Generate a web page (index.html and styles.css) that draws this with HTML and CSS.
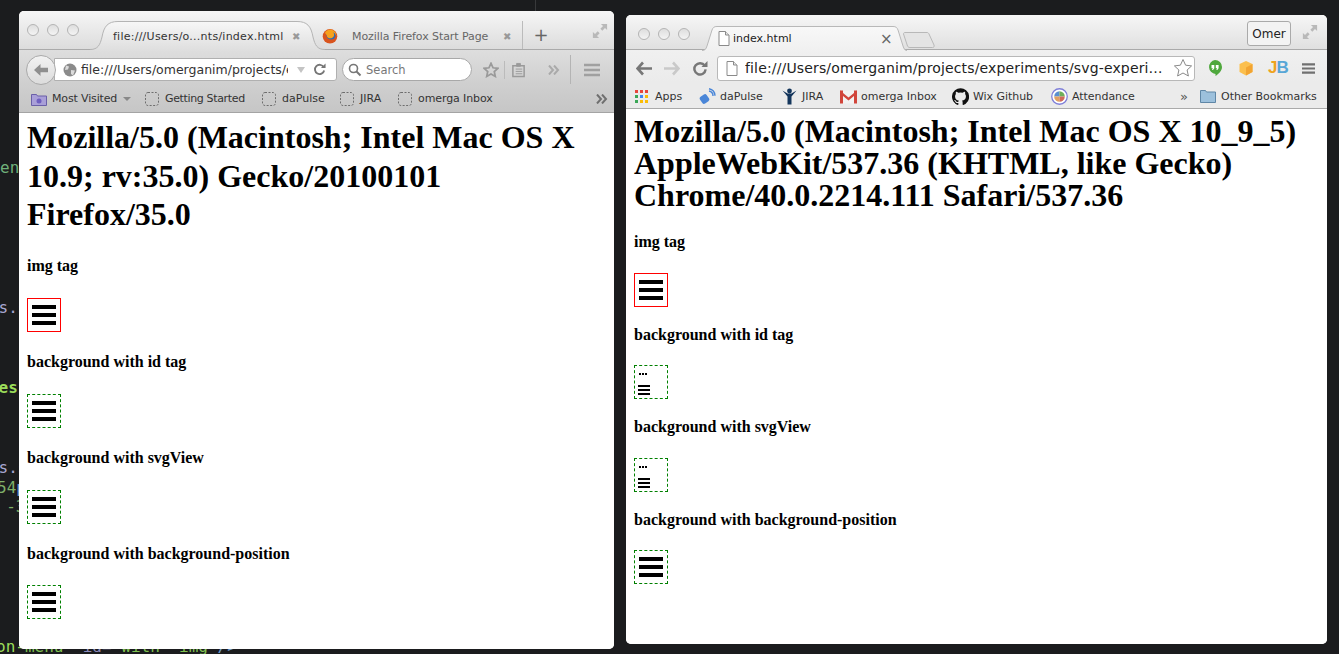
FILE: index.html
```html
<!DOCTYPE html>
<html lang="en">
<head>
<meta charset="utf-8">
<title>Firefox and Chrome side by side</title>
<link rel="stylesheet" href="styles.css">
</head>
<body>
<svg class="defs" width="0" height="0" aria-hidden="true">
  <defs>
    <linearGradient id="tabfill" x1="0" y1="0" x2="0" y2="1"><stop offset="0" stop-color="#f7f7f7"/><stop offset="1" stop-color="#dedede"/></linearGradient>
    <linearGradient id="crfill" x1="0" y1="0" x2="0" y2="1"><stop offset="0" stop-color="#f8f8f8"/><stop offset="1" stop-color="#f0f0f0"/></linearGradient>
    <symbol id="burger" viewBox="0 0 24 20"><rect width="24" height="4"/><rect y="8" width="24" height="4"/><rect y="16" width="24" height="4"/></symbol>
    <symbol id="broken" viewBox="0 0 32 32">
      <rect x="4" y="7" width="2" height="2"/><rect x="7" y="7" width="2" height="2"/><rect x="10" y="7" width="2" height="2"/>
      <rect x="3" y="19" width="12" height="2"/><rect x="3" y="23" width="12" height="2"/><rect x="3" y="27" width="12" height="2"/>
    </symbol>
    <symbol id="full" viewBox="0 0 18 18"><path d="M10 1h7v7l-2.400-2.400-3 3-2.200-2.200 3-3zM1 10v7h7l-2.400-2.400 3-3-2.200-2.200-3 3z"/></symbol>
    <symbol id="chev" viewBox="0 0 12 10"><path d="M1 .5L5 5 1 9.500M6 .5L10 5 6 9.500" fill="none" stroke="currentColor" stroke-width="2"/></symbol>
    <symbol id="dash" viewBox="0 0 14 14"><rect x=".5" y=".5" width="13" height="13" rx="2.500" fill="none" stroke="#6d6d6d" stroke-dasharray="2 1.500"/></symbol>
    <symbol id="doc" viewBox="0 0 12 15"><path d="M1 .5h6.500l3.500 3.500v10.500H1z" fill="#fff" stroke="#8a8a8a"/><path d="M7.500.5V4H11" fill="#e6e6e6" stroke="#8a8a8a"/></symbol>
  </defs>
</svg>

<div class="code code-a">eng</div>
<div class="code code-b">s.s</div>
<div class="code code-c">es.</div>
<div class="code code-d">s.s</div>
<div class="code code-e">54<span class="blue">p</span></div>
<div class="code code-f"> -3</div>
<div class="code code-g"><b class="bright">on-</b>menu" <span class="purple">id=</span>"with  img <span class="blue">/&gt;</span></div>
<div class="rule"></div>

<section class="window firefox">
  <div class="tabbar ff-tabbar">
    <div class="lights"><i></i><i></i><i></i></div>
    <div class="ff-tab">
      <svg class="ff-tabshape" viewBox="0 0 235 30"><path d="M0 28.500C8 28.500 10 24 12 16 14 5 18 .5 28 .5H207C217 .5 221 5 223 16 225 24 227 28.500 235 28.500V30H0z" fill="url(#tabfill)"/><path d="M0 28.500C8 28.500 10 24 12 16 14 5 18 .5 28 .5H207C217 .5 221 5 223 16 225 24 227 28.500 235 28.500" fill="none" stroke="#b4b4b4"/></svg>
      <span class="ff-tabtext">file:///Users/o...nts/index.html</span><span class="x">✖</span>
    </div>
    <div class="ff-tab2">
      <svg class="ff-logo" viewBox="0 0 16 16"><circle cx="8" cy="8.300" r="7.300" fill="#d9541e"/><circle cx="9" cy="7" r="4.600" fill="#2f6bb0"/><path d="M9 1.500c3.500 1 5.500 3.500 5.300 7-.3-2-1.300-3.500-3-4.300 1 1.500 1 3.300 0 4.800-1.300 1.600-4 1.800-5.500.5-.8-.7-1-1.600-1-2.300L3 5c.5-2 3-3.500 6-3.500z" fill="#f6a11c"/></svg>
      <span class="ff-tabtext2">Mozilla Firefox Start Page</span><span class="x x2">✖</span>
    </div>
    <div class="ff-plus">+</div>
    <svg class="full ff-full"><use href="#full"/></svg>
  </div>
  <div class="ff-toolbar">
    <div class="ff-back"><svg viewBox="0 0 16 16"><path d="M1 8l6.500-6v3.800H15v4.400H7.500V14z" fill="#8f8f8f"/></svg></div>
    <div class="ff-url">
      <svg class="globe" viewBox="0 0 14 14"><circle cx="7" cy="7" r="6.500" fill="#8b8b8b"/><path d="M3 2.500l3 1-1 3-3 .5zM8 7l4 .5-2 5-2-1.500z" fill="#dcdcdc"/></svg>
      <span class="ff-urltext">file:///Users/omerganim/projects/experiments</span>
      <span class="ff-drop"></span>
      <svg class="ff-reload" viewBox="0 0 14 14"><path d="M11.500 4.500A5 5 0 1 0 12 8" fill="none" stroke="#777" stroke-width="2"/><path d="M8.500 5.500h5v-5z" fill="#777"/></svg>
    </div>
    <div class="ff-search">
      <svg viewBox="0 0 14 14"><circle cx="5.500" cy="5.500" r="4" fill="none" stroke="#777" stroke-width="1.600"/><path d="M8.500 8.500l4 4" stroke="#777" stroke-width="2"/></svg>
      <span>Search</span>
    </div>
    <svg class="ff-star" viewBox="0 0 18 18"><path d="M9 1.500l2.300 5 5.400.6-4 3.700 1.100 5.400L9 13.500l-4.800 2.700 1.100-5.400-4-3.700 5.400-.6z" fill="none" stroke="#9a9a9a" stroke-width="2"/></svg>
    <span class="ff-sep"></span>
    <svg class="ff-clip" viewBox="0 0 16 16"><path d="M2 3.500h12v11.500H2z" fill="none" stroke="#9a9a9a" stroke-width="1.600"/><path d="M6 1h4v3H6zM5 7h7M5 9.500h7M5 12h7" stroke="#9a9a9a" fill="#9a9a9a"/></svg>
    <svg class="ff-more"><use href="#chev"/></svg>
    <span class="ff-sep2"></span>
    <svg class="ff-menu" viewBox="0 0 16 14"><path d="M0 2h16M0 7h16M0 12h16" stroke="#a0a0a0" stroke-width="2.400"/></svg>
  </div>
  <div class="ff-bookmarks">
    <svg class="ff-folder" viewBox="0 0 16 14"><path d="M.5 2.500h5l1 1.500h9v9.500H.5z" fill="#a99fd8" stroke="#6a5fa8"/><circle cx="8" cy="9" r="2.500" fill="#6f5fc0"/></svg>
    <span class="bm-a">Most Visited</span><span class="bm-caret"></span>
    <svg class="dash"><use href="#dash"/></svg><span class="bm-b">Getting Started</span>
    <svg class="dash"><use href="#dash"/></svg><span class="bm-c">daPulse</span>
    <svg class="dash"><use href="#dash"/></svg><span class="bm-d">JIRA</span>
    <svg class="dash"><use href="#dash"/></svg><span class="bm-e">omerga Inbox</span>
    <svg class="ff-more2"><use href="#chev"/></svg>
  </div>
  <main class="page ff-page">
    <h1>Mozilla/5.0 (Macintosh; Intel Mac OS X 10.9; rv:35.0) Gecko/20100101 Firefox/35.0</h1>
    <h4>img tag</h4>
    <div class="box solid"><svg class="bars"><use href="#burger"/></svg></div>
    <h4>background with id tag</h4>
    <div class="box dashed"><svg class="bars"><use href="#burger"/></svg></div>
    <h4>background with svgView</h4>
    <div class="box dashed"><svg class="bars"><use href="#burger"/></svg></div>
    <h4>background with background-position</h4>
    <div class="box dashed"><svg class="bars"><use href="#burger"/></svg></div>
  </main>
</section>

<section class="window chrome">
  <div class="tabbar cr-tabbar">
    <div class="lights"><i></i><i></i><i></i></div>
    <div class="cr-tab">
      <svg class="cr-tabshape" viewBox="0 0 205 25"><path d="M0 24.500C3 24.500 4 23 5 20L10 4C11 1.500 12 .5 15 .5H191C194 .5 195 1.500 196 4L201 20C202 23 203 24.500 205 24.500V25H0z" fill="url(#crfill)"/><path d="M0 24.500C3 24.500 4 23 5 20L10 4C11 1.500 12 .5 15 .5H191C194 .5 195 1.500 196 4L201 20C202 23 203 24.500 205 24.500" fill="none" stroke="#b8b8b8"/></svg>
      <svg class="cr-doc"><use href="#doc"/></svg><span class="cr-tabtext">index.html</span><span class="cr-x">×</span>
    </div>
    <svg class="cr-newtab" viewBox="0 0 32 16"><path d="M.5 2C.5 1 1 .5 2 .5H24C25 .5 25.500 1 26 2L31 13C31.500 14.500 31 15.500 29.500 15.500H7C5.500 15.500 5 15 4.500 14z" fill="#e4e4e4" stroke="#b8b8b8"/></svg>
    <div class="cr-user">Omer</div>
    <svg class="full cr-full"><use href="#full"/></svg>
  </div>
  <div class="cr-toolbar">
    <svg class="cr-nav" viewBox="0 0 16 14"><path d="M7 1L1.500 7 7 13M2 7h14" fill="none" stroke="#777" stroke-width="2.600"/></svg>
    <svg class="cr-nav" viewBox="0 0 16 14"><path d="M9 1l5.500 6L9 13M14 7H0" fill="none" stroke="#c9c9c9" stroke-width="2.600"/></svg>
    <svg class="cr-nav" viewBox="0 0 16 16"><path d="M13 5a6 6 0 1 0 1 4" fill="none" stroke="#777" stroke-width="2.600"/><path d="M9.500 6.500H16V0z" fill="#777"/></svg>
    <div class="cr-url">
      <svg class="cr-doc2"><use href="#doc"/></svg>
      <span class="cr-urltext">file:///Users/omerganim/projects/experiments/svg-experi…</span>
      <svg class="cr-star" viewBox="0 0 20 20"><path d="M10 1.500l2.600 5.700 6 .7-4.500 4.100 1.300 6L10 15l-5.400 3 1.300-6L1.400 7.900l6-.7z" fill="#fff" stroke="#8a8a8a"/></svg>
    </div>
    <svg class="ext" viewBox="0 0 16 18"><path d="M8 1a7 7 0 0 1 7 7c0 4-3.500 7-6.500 9v-2.100A7 7 0 0 1 8 1z" fill="#4fa83d"/><path d="M4.500 6h2.800v3.200L6 11H5l.8-1.800H4.500zM8.800 6h2.800v3.200L10.300 11h-1l.8-1.800H8.800z" fill="#fff"/></svg>
    <svg class="ext" viewBox="0 0 16 16"><path d="M8 1l6.500 3v8L8 15.500 1.500 12V4z" fill="#fbbf4d"/><path d="M8 7.500l6.500-3.500v8L8 15.500z" fill="#f2a431"/></svg>
    <span class="ext-jb"><b class="j">J</b><b class="b">B</b></span>
    <svg class="cr-menu" viewBox="0 0 14 13"><path d="M0 2h14M0 6.500h14M0 11h14" stroke="#707070" stroke-width="2.400"/></svg>
  </div>
  <div class="cr-bookmarks">
    <svg class="fav apps" viewBox="0 0 13 13">
      <path fill="#e8453c" d="M0 0h3v3H0zM5 0h3v3H5zM10 0h3v3h-3z"/>
      <path fill="#3aa757" d="M0 5h3v3H0z"/><path fill="#4285f4" d="M5 5h3v3H5z"/><path fill="#fbbc05" d="M10 5h3v3h-3z"/>
      <path fill="#3aa757" d="M0 10h3v3H0z"/><path fill="#fbbc05" d="M5 10h3v3H5zM10 10h3v3h-3z"/>
    </svg>
    <span class="t-apps">Apps</span>
    <svg class="fav" viewBox="0 0 17 17"><rect x="1.500" y="7" width="8" height="8" rx="2" transform="rotate(-35 5.500 11)" fill="#4a86d8"/><path d="M10 3a5 5 0 0 1 4 5M10 .8a7.500 7.500 0 0 1 6 7" fill="none" stroke="#4a86d8" stroke-width="1.400"/></svg>
    <span class="t-dap">daPulse</span>
    <svg class="fav" viewBox="0 0 17 17"><circle cx="8.500" cy="3" r="2.400" fill="#14365c"/><path d="M1.500 2.500l5 6v8h4v-8l5-6-5 3h-4z" fill="#14365c"/></svg>
    <span class="t-jira">JIRA</span>
    <svg class="fav" viewBox="0 0 17 14"><path d="M0 1h17v13H0z" fill="#f2f2f2"/><path d="M0 1h3v13H0zM14 1h3v13h-3z" fill="#d1453b"/><path d="M0 1l8.500 7L17 1v3L8.500 11 0 4z" fill="#d1453b"/></svg>
    <span class="t-ome">omerga Inbox</span>
    <svg class="fav" viewBox="0 0 16 16"><path d="M8 .3a8 8 0 0 0-2.500 15.600c.4 0 .5-.2.500-.4v-1.400c-2.200.5-2.700-1-2.700-1-.4-.9-.9-1.200-.9-1.200-.7-.5.100-.5.100-.5.800.1 1.200.8 1.200.8.700 1.200 1.900.9 2.300.7 0-.5.300-.9.500-1.100-1.800-.2-3.600-.9-3.600-4 0-.9.300-1.600.8-2.100 0-.2-.4-1 .1-2.100 0 0 .7-.2 2.200.8a7.600 7.600 0 0 1 4 0c1.500-1 2.200-.8 2.200-.8.500 1.100.1 1.900.1 2.100.5.5.8 1.200.8 2.100 0 3.100-1.900 3.800-3.700 4 .3.300.6.800.6 1.500v2.200c0 .2.100.5.600.4A8 8 0 0 0 8 .3z" fill="#111"/></svg>
    <span class="t-wix">Wix Github</span>
    <svg class="fav" viewBox="0 0 16 16"><circle cx="8" cy="8" r="7.300" fill="#fff" stroke="#7f7fd8" stroke-width="1.200"/><path d="M8 3a5 5 0 0 0-5 5h5z" fill="#5a8fd0"/><path d="M8 3a5 5 0 0 1 5 5H8z" fill="#6fae5a"/><path d="M3 8a5 5 0 0 0 5 5V8z" fill="#e0a060"/><path d="M13 8a5 5 0 0 1-5 5V8z" fill="#d06a5a"/></svg>
    <span class="t-att">Attendance</span>
    <span class="cr-more">»</span>
    <svg class="cr-folder" viewBox="0 0 16 14"><path d="M.5 3V1.500h5l1 1.500h9v10.500H.5z" fill="#9cc0dc" stroke="#5f86a6"/></svg>
    <span class="t-oth">Other Bookmarks</span>
  </div>
  <main class="page cr-page">
    <h1>Mozilla/5.0 (Macintosh; Intel Mac OS X 10_9_5) AppleWebKit/537.36 (KHTML, like Gecko) Chrome/40.0.2214.111 Safari/537.36</h1>
    <h4>img tag</h4>
    <div class="box solid"><svg class="bars"><use href="#burger"/></svg></div>
    <h4>background with id tag</h4>
    <div class="box dashed"><svg class="sprite"><use href="#broken"/></svg></div>
    <h4>background with svgView</h4>
    <div class="box dashed"><svg class="sprite"><use href="#broken"/></svg></div>
    <h4>background with background-position</h4>
    <div class="box dashed"><svg class="bars"><use href="#burger"/></svg></div>
  </main>
</section>
</body>
</html>
```

FILE: styles.css
```css
* { box-sizing: border-box; }
html, body { height: 100%; }
body {
  margin: 0;
  background: #1b1c1e;
  overflow: hidden;
  position: relative;
  font-family: "DejaVu Sans", sans-serif;
}
.defs { position: absolute; }

/* desktop: editor text showing behind the windows */
.code {
  position: absolute;
  left: 0;
  font: 16px/20px "DejaVu Sans Mono", monospace;
  white-space: pre;
  color: #a8a7d2;
}
.code-a { top: 158px; color: #6fb07a; }
.code-b { top: 298px; left: -1.500px; }
.code-c { top: 378px; color: #9bdc5a; font-weight: bold; left: -1.500px; }
.code-d { top: 458px; left: -1.500px; }
.code-e { top: 478px; color: #7fb069; left: -3px; }
.code-f { top: 497px; color: #7fb069; left: -3.500px; }
.code-g { top: 637px; color: #7fc050; left: -4px; }
.code-g .bright { color: #9bdc5a; font-weight: normal; }
.code-g .purple { color: #8a89b8; }
.blue { color: #6f9fd0; }
.rule { position: absolute; left: 535px; top: 0; width: 1px; height: 12px; background: #38393b; }

.window {
  position: absolute;
  display: flex;
  flex-direction: column;
  background: #fff;
  border-radius: 5px;
  overflow: hidden;
  color: #333;
  font-size: 11px;
}
.firefox { left: 19px; top: 11px; width: 595px; height: 638px; }
.chrome { left: 626px; top: 15px; width: 701px; height: 629px; }

.tabbar { display: flex; align-items: flex-start; flex: none; position: relative; }
.lights { display: flex; gap: 8px; flex: none; }
.lights i {
  display: block; width: 12px; height: 12px; border-radius: 50%;
  border: 1px solid #b4b4b4;
  background: linear-gradient(#dedede, #f4f4f4);
}
.full { width: 16px; height: 16px; fill: #b9b9b9; flex: none; }

/* ---------- Firefox chrome ---------- */
.ff-tabbar {
  height: 39px;
  background: linear-gradient(#f6f6f6, #dcdcdc);
  border-bottom: 1px solid #aaa;
}
.ff-tabbar .lights { margin: 13px 0 0 8px; }
.ff-tab {
  display: flex; align-items: center;
  width: 214px; height: 29px;
  margin: 10px 0 0 21px;
  padding: 1px 0 0 13px;
  color: #333;
  position: relative;
  z-index: 1;
}
.ff-tabshape { position: absolute; left: -10px; top: 0; width: 235px; height: 30px; }
.ff-tabtext { position: relative; width: 170px; white-space: nowrap; letter-spacing: .25px; }
.x { position: relative; font-size: 10px; color: #999; margin-left: 9px; }
.ff-tab2 {
  display: flex; align-items: center;
  margin-top: 10px; height: 28px; width: 209px; padding: 2px 0 0 8px;
  color: #666; border-right: 1px solid #bbb;
}
.ff-logo { width: 16px; height: 16px; flex: none; }
.ff-tabtext2 { margin-left: 14px; white-space: nowrap; width: 136px; letter-spacing: -.08px; }
.x2 { margin-left: 15px; }
.ff-plus { width: 36px; margin-top: 10px; text-align: center; font-size: 18px; line-height: 28px; color: #666; }
.ff-full { margin: 12px 0 0 33px; }

.ff-toolbar {
  display: flex; align-items: center;
  height: 34px; flex: none; padding-top: 5px;
  background: linear-gradient(#dedede, #cfcfcf);
}
.ff-back {
  width: 30px; height: 30px; margin-left: 7px; flex: none;
  display: flex; align-items: center; justify-content: center;
  border: 1px solid #aaa; border-radius: 50%;
  background: linear-gradient(#f2f2f2, #dcdcdc);
  position: relative; z-index: 1;
}
.ff-back svg { width: 16px; height: 16px; }
.ff-url {
  display: flex; align-items: center;
  width: 283px; height: 23px; margin-left: -2px; padding-left: 8px;
  background: #fff;
  border: 1px solid #b0b0b0; border-radius: 0 3px 3px 0;
}
.globe { width: 14px; height: 14px; flex: none; }
.ff-urltext { width: 207px; margin-left: 4px; overflow: hidden; white-space: nowrap; color: #333; font-size: 12.500px; flex: none; }
.ff-drop { width: 0; height: 0; margin-left: 9px; border: 4px solid transparent; border-top: 6px solid #c4c4c4; border-bottom: 0; }
.ff-reload { width: 13px; height: 13px; margin-left: 8px; flex: none; }
.ff-search {
  display: flex; align-items: center; gap: 4px;
  width: 130px; height: 23px; margin-left: 5px; padding-left: 5px;
  background: #fff; border: 1px solid #a8a8a8; border-radius: 12px;
  color: #777; font-size: 11.500px;
}
.ff-search svg { width: 14px; height: 14px; }
.ff-star { width: 16px; height: 16px; margin-left: 11px; flex: none; }
.ff-sep { width: 1px; height: 18px; margin-left: 5px; background: #bbb; }
.ff-clip { width: 15px; height: 16px; margin-left: 6px; flex: none; }
.ff-more { width: 12px; height: 10px; margin-left: 22px; color: #aaa; flex: none; }
.ff-sep2 { width: 1px; height: 29px; margin-left: 10px; background: #b4b4b4; }
.ff-menu { width: 16px; height: 14px; margin-left: 13px; flex: none; }

.ff-bookmarks {
  display: flex; align-items: center;
  height: 29px; flex: none; padding: 1px 0 0 12px;
  background: linear-gradient(#cfcfcf, #c6c6c6);
  border-bottom: 1px solid #a4a4a4;
  color: #333;
}
.ff-folder { width: 16px; height: 14px; flex: none; }
.bm-a { margin-left: 5px; width: 65px; white-space: nowrap; letter-spacing: -.15px; }
.bm-caret { width: 0; height: 0; margin: 0 14px 0 6px; border: 4px solid transparent; border-top: 4px solid #888; border-bottom: 0; }
.dash { width: 14px; height: 14px; flex: none; }
.bm-b, .bm-c, .bm-d, .bm-e { margin-left: 6px; white-space: nowrap; }
.bm-b { width: 97px; letter-spacing: -.35px; }
.bm-c { width: 58px; }
.bm-d { width: 38px; }
.bm-e { width: 74px; letter-spacing: -.1px; }
.ff-more2 { margin-left: auto; margin-right: 6px; width: 12px; height: 10px; color: #707070; flex: none; }

/* ---------- Chrome chrome ---------- */
.cr-tabbar {
  height: 35px;
  background: linear-gradient(#f6f6f6, #e0e0e0);
  border-bottom: 1px solid #aaa;
}
.cr-tabbar .lights { margin: 13px 0 0 12px; }
.cr-tab {
  display: flex; align-items: center;
  width: 205px; height: 24px; margin: 11px 0 0 12px; padding: 1px 0 0 16px;
  color: #222;
  position: relative;
}
.cr-tabshape { position: absolute; left: 0; top: 0; width: 205px; height: 25px; }
.cr-doc { position: relative; width: 12px; height: 15px; flex: none; }
.cr-tabtext { position: relative; margin-left: 3px; width: 147px; }
.cr-x { position: relative; font-size: 15px; color: #666; }
.cr-newtab { width: 32px; height: 16px; margin: 17px 0 0 -4px; flex: none; }
.cr-user {
  margin: 6px 0 0 auto; width: 44px; height: 25px;
  display: flex; align-items: center; justify-content: center;
  border: 1px solid #aaa; border-radius: 3px;
  background: #f3f3f3; color: #222; font-size: 12px;
}
.cr-full { margin: 9px 9px 0 11px; }

.cr-toolbar {
  display: flex; align-items: center;
  height: 32px; flex: none; padding: 4px 0 0 10px;
  background: linear-gradient(#f0f0f0, #ebebeb);
}
.cr-nav { width: 16px; height: 15px; margin-right: 12px; flex: none; }
.cr-url {
  display: flex; align-items: center;
  width: 478px; height: 25px; margin-left: -3px; padding-left: 8px;
  background: #fff; border: 1px solid #b8b8b8; border-radius: 3px;
}
.cr-doc2 { width: 12px; height: 15px; flex: none; }
.cr-urltext { margin-left: 7px; width: 422px; white-space: nowrap; overflow: hidden; font-size: 14px; letter-spacing: .15px; color: #222; }
.cr-star { width: 20px; height: 20px; margin-left: 6px; flex: none; }
.ext { width: 16px; height: 18px; margin-left: 12px; flex: none; }
.ext + .ext { margin-left: 15px; }
.ext-jb { margin-left: 14px; font-size: 17px; width: 19px; white-space: nowrap; font-family: "Liberation Sans", sans-serif; letter-spacing: -1px; }
.ext-jb .j { color: #eea320; font-weight: bold; }
.ext-jb .b { color: #58a6d6; font-weight: bold; }
.cr-menu { width: 13px; height: 13px; margin-left: 15px; flex: none; }

.cr-bookmarks {
  display: flex; align-items: center;
  height: 27px; flex: none; padding: 2px 0 0 9px;
  background: #ebebeb;
  border-bottom: 1px solid #aaa;
  color: #333;
}
.fav { width: 17px; height: 17px; flex: none; }
.apps { width: 13px; height: 13px; }
.t-apps, .t-dap, .t-jira, .t-ome, .t-wix, .t-att, .t-oth { margin-left: 4px; white-space: nowrap; }
.t-apps { width: 44px; margin-left: 7px; }
.t-dap { width: 61px; }
.t-jira { width: 38px; }
.t-ome { width: 93px; margin-right: -2px; }
.t-wix { width: 78px; letter-spacing: -.05px; }
.t-att { width: 62px; letter-spacing: -.05px; }
.cr-more { margin-left: 46px; color: #555; font-size: 13px; width: 20px; }
.cr-folder { width: 16px; height: 14px; flex: none; }
.t-oth { margin-left: 5px; letter-spacing: -.03px; }

/* ---------- page content ---------- */
.page {
  flex: 1;
  padding: 0 8px;
  background: #fff;
  color: #000;
  font-family: "Liberation Serif", serif;
}
h1 { margin: 0; font-size: 32px; font-weight: bold; }
h4 { margin: 0; font-size: 16px; font-weight: bold; line-height: 18px; }
.box { width: 34px; height: 34px; display: flex; align-items: center; justify-content: center; }
.solid { border: 1px solid #f00; }
.dashed { border: 1px dashed #008000; }
.bars { width: 24px; height: 20px; fill: #000; }
.sprite { width: 32px; height: 32px; fill: #000; }

.ff-page h1 { line-height: 38.670px; margin-top: 5px; }
.ff-page h4 { margin-top: 21px; }
.ff-page h1 + h4 { margin-top: 23px; }
.ff-page .box { margin-top: 23px; }
.ff-page .box:last-child { margin-top: 22px; }

.cr-page h1 { line-height: 32px; margin-top: 6px; }
.cr-page h4 { margin-top: 19.330px; }
.cr-page h1 + h4 { margin-top: 22px; }
.cr-page .box { margin-top: 21.330px; }
.cr-page h1 + h4 + .box { margin-top: 22.330px; margin-bottom: -1px; }
```
